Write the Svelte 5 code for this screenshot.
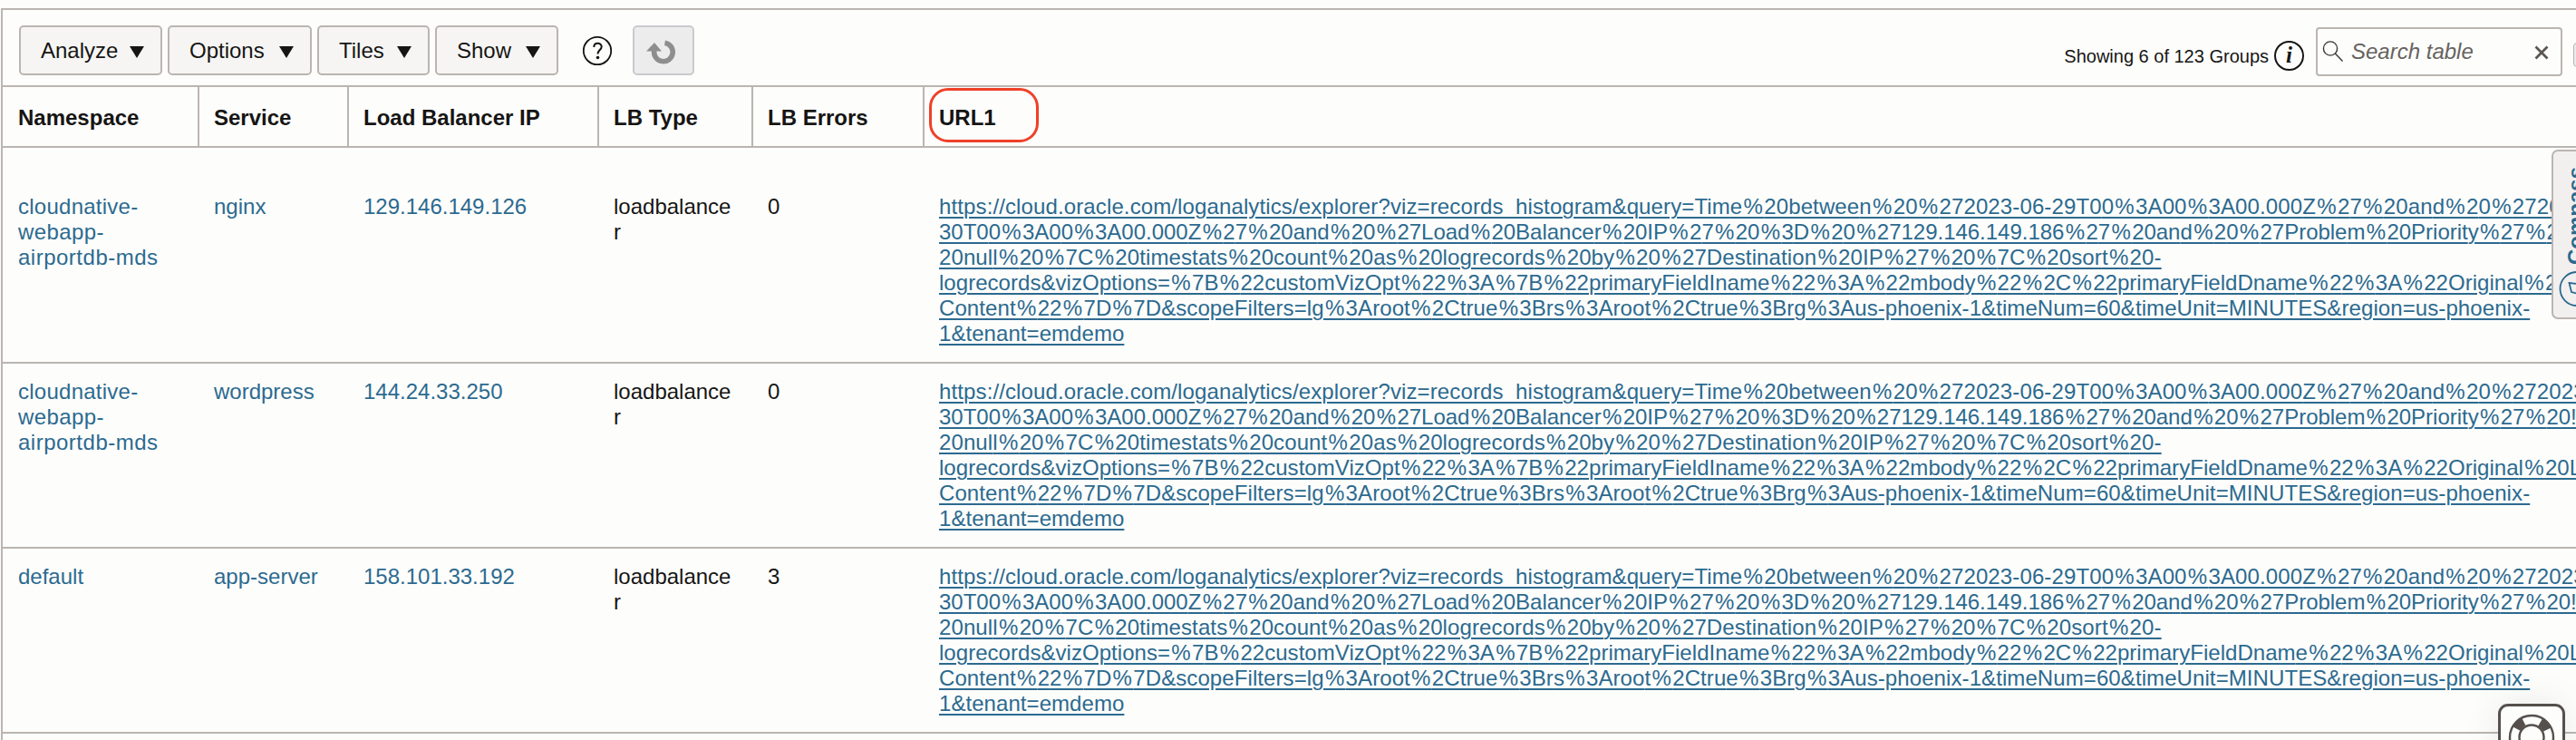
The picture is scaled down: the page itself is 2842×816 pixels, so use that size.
<script>
  const columns = [
    { label: 'Namespace' },
    { label: 'Service' },
    { label: 'Load Balancer IP' },
    { label: 'LB Type' },
    { label: 'LB Errors' },
    { label: 'URL1', marked: true },
  ];
  const menus = [
    { label: 'Analyze', width: 158 },
    { label: 'Options', width: 159 },
    { label: 'Tiles', width: 124 },
    { label: 'Show', width: 136 },
  ];
  const urlLines = [
    { text: 'https://cloud.oracle.com/loganalytics/explorer?viz=records_histogram&query=Time%20between%20%272023-06-29T00%3A00%3A00.000Z%27%20and%20%272023', ls: 0.12 },
    { text: '30T00%3A00%3A00.000Z%27%20and%20%27Load%20Balancer%20IP%27%20%3D%20%27129.146.149.186%27%20and%20%27Problem%20Priority%27%20!=', ls: -0.02 },
    { text: '20null%20%7C%20timestats%20count%20as%20logrecords%20by%20%27Destination%20IP%27%20%7C%20sort%20-', ls: 0.11 },
    { text: 'logrecords&vizOptions=%7B%22customVizOpt%22%3A%7B%22primaryFieldIname%22%3A%22mbody%22%2C%22primaryFieldDname%22%3A%22Original%20Lo', ls: 0.04 },
    { text: 'Content%22%7D%7D&scopeFilters=lg%3Aroot%2Ctrue%3Brs%3Aroot%2Ctrue%3Brg%3Aus-phoenix-1&timeNum=60&timeUnit=MINUTES&region=us-phoenix-', ls: 0.09 },
    { text: '1&tenant=emdemo', ls: 0.06 },
  ];
  // Splits a URL line so the space around each percent sign can be widened evenly.
  const tokens = (text) => text.match(/[^%]%|[^%]+?(?=[^%]%|$)/g);
  const webapp = [
    { text: 'cloudnative-', ls: 0.25 },
    { text: 'webapp-', ls: 0.4 },
    { text: 'airportdb-mds', ls: 0.5 },
  ];
  const rows = [
    { ns: webapp, service: 'nginx', ip: '129.146.149.126', errors: '0' },
    { ns: webapp, service: 'wordpress', ip: '144.24.33.250', errors: '0' },
    { ns: [{ text: 'default', ls: 0 }], service: 'app-server', ip: '158.101.33.192', errors: '3' },
  ];
</script>

<div class="page">
  <div class="panel">
    <header class="toolbar">
      {#each menus as m}
        <button class="menu" style="width:{m.width}px"><span>{m.label}</span>
          <svg width="16" height="13" viewBox="0 0 16 13"><path d="M0 0H16L8 13Z" fill="#161513" /></svg>
        </button>
      {/each}
      <svg class="help" width="34" height="34" viewBox="0 0 34 34" fill="none" stroke="#161513" stroke-width="1.800">
        <circle cx="17" cy="17" r="15.200" />
        <path d="M13.300 13C13.300 7.300 21.700 7.500 21.700 12.500C21.700 16 17.500 16 17.500 20.500" stroke-width="2" />
        <circle cx="17.500" cy="24.500" r="1.800" fill="#161513" stroke="none" />
      </svg>
      <button class="redo" aria-label="Refresh">
        <svg width="34" height="30" viewBox="0 0 34 30"><path d="M18.500 6.200A10.300 10.300 0 1 1 6.700 15" fill="none" stroke="#8e8e8e" stroke-width="5.600" /><path d="M-2 15.500L7 6L15 15.500Z" fill="#8e8e8e" /></svg>
      </button>
      <div class="right">
        <span class="count">Showing 6 of 123 Groups</span>
        <span class="info">i</span>
        <div class="search">
          <svg width="24" height="26" viewBox="0 0 24 26" fill="none" stroke="#3a3632" stroke-width="1.400"><circle cx="9" cy="9.500" r="7.600" /><path d="M14.300 15L22.500 23.500" /></svg>
          <span class="ph">Search table</span>
          <svg class="x" width="16" height="16" viewBox="0 0 16 16" stroke="#5b5652" stroke-width="2.800"><path d="M1.500 1.500L14.500 14.500M14.500 1.500L1.500 14.500" /></svg>
        </div>
        <div class="edge"></div>
      </div>
    </header>
    <div class="grid head">
      {#each columns as c}<div class="th" class:marked={c.marked}><span>{c.label}</span></div>{/each}
    </div>
    {#each rows as r}
      <div class="grid row">
        <div class="td link">{#each r.ns as n}<div style="letter-spacing:{n.ls}px">{n.text}</div>{/each}</div>
        <div class="td link">{r.service}</div>
        <div class="td link">{r.ip}</div>
        <div class="td"><div>loadbalance</div><div>r</div></div>
        <div class="td">{r.errors}</div>
        <div class="td link url">{#each urlLines as l}<div><a href="#url" style="letter-spacing:{l.ls}px">{#each tokens(l.text) as t}{#if t.endsWith('%')}<span class="pct">{t}</span>{:else}{t}{/if}{/each}</a></div>{/each}</div>
      </div>
    {/each}
    <div class="next"></div>
  </div>
  <aside class="compass">
    <span>Compass</span>
    <svg width="40" height="40" viewBox="0 0 40 40" fill="none" stroke="#2c6a8f" stroke-width="1.800"><circle cx="20" cy="20.500" r="18.500" /><path d="M11.500 14L28 16L25 27L14 24Z" /></svg>
  </aside>
  <div class="support">
    <svg width="52" height="52" viewBox="0 0 52 52" fill="none" stroke="#55504c"><circle cx="26" cy="26" r="19" stroke-width="9" stroke-dasharray="11 18.850" stroke-dashoffset="-9.400" /><circle cx="26" cy="26" r="24" stroke-width="2.400" /><circle cx="26" cy="26" r="13.500" stroke-width="2.400" /></svg>
  </div>
</div>

<style>
  :global(body) { background: #fdfdfc; overflow: hidden; }
  .page { position: relative; width: 2842px; height: 816px; overflow: hidden; background: #fdfdfc; font: 24px/28px "Liberation Sans", Arial, sans-serif; color: #161513; white-space: nowrap; }
  .panel { margin: 9px 0 0 1px; border-top: 2px solid #bbb5b0; border-left: 2px solid #bbb5b0; height: 820px; }
  .toolbar { height: 83px; box-sizing: border-box; display: flex; padding-left: 18px; }
  .menu { box-sizing: border-box; height: 55px; margin: 17px 6px 0 0; padding: 0 18px 0 22px; border: 2px solid #bbb5b0; border-radius: 5px; background: #f6f5f4; font: inherit; color: inherit; display: flex; align-items: center; justify-content: space-between; }
  .menu svg { margin-top: 3px; }
  .help { margin: 28px 0 0 20px; }
  .redo { box-sizing: border-box; width: 68px; height: 55px; margin: 17px 0 0 22px; padding: 0; display: grid; place-items: center; background: #ececed; border: 2px solid #cacace; border-radius: 5px; }
  .redo svg { overflow: visible; }
  .right { margin-left: auto; display: flex; }
  .count { margin-top: 37px; font-size: 20px; }
  .info { box-sizing: border-box; width: 33px; height: 33px; margin: 34px 0 0 6px; border: 2px solid #161513; border-radius: 50%; text-align: center; font: italic bold 25px/28px "Liberation Serif", serif; }
  .search { box-sizing: border-box; width: 272px; height: 54px; margin: 19px 0 0 13px; padding: 0 13px 0 5px; border: 2px solid #bbb5b0; border-radius: 4px; display: flex; align-items: center; }
  .ph { margin-left: 8px; font-style: italic; color: #67625e; }
  .x { margin-left: auto; margin-top: 1px; }
  .edge { width: 10px; height: 27px; margin: 36px -7px 0 12px; border: 1px solid #bbb5b0; border-radius: 4px; background: #ececed; box-sizing: border-box; }
  .grid { display: grid; grid-template-columns: 217px 165px 276px 170px 189px 1822px; box-sizing: border-box; }
  .head { height: 67px; border-top: 2px solid #bbb5b0; font-weight: bold; }
  .th { border-right: 2px solid #bbb5b0; padding: 20px 0 0 16px; box-sizing: border-box; }
  .th:last-child { border-right: 0; }
  .row { height: 204px; border-top: 2px solid #bbb5b0; padding-top: 17px; }
  .head + .row { height: 238px; padding-top: 51px; }
  .td { padding-left: 16px; }
  .th:first-child, .td:first-child { padding-left: 17px; }
  .next { border-top: 2px solid #bbb5b0; }
  .link, a { color: #2c6a8f; }
  a { text-decoration: underline; text-decoration-thickness: 2px; text-underline-offset: 3px; }
  .pct { letter-spacing: 1.34px; }
  .marked { position: relative; }
  .marked::after { content: ''; position: absolute; left: 5px; top: 1px; width: 115px; height: 54px; border: 3px solid #ee4128; border-radius: 21px; }
  .compass { position: absolute; left: 2815px; top: 165px; width: 60px; height: 183px; border: 2px solid #bbb5b0; border-radius: 7px; background: #f2f0ef; }
  .compass span { position: absolute; left: 11px; bottom: 58px; writing-mode: vertical-rl; transform: rotate(180deg); color: #2c6a8f; font-weight: bold; }
  .compass svg { position: absolute; left: 6px; bottom: 12px; }
  .support { position: absolute; left: 2756px; top: 776px; width: 68px; height: 70px; border: 3px solid #55504c; border-radius: 11px; background: #fdfdfc; box-shadow: 0 0 40px rgba(0, 0, 0, .08); }
  .support svg { position: absolute; left: 8px; top: 8px; }
</style>
